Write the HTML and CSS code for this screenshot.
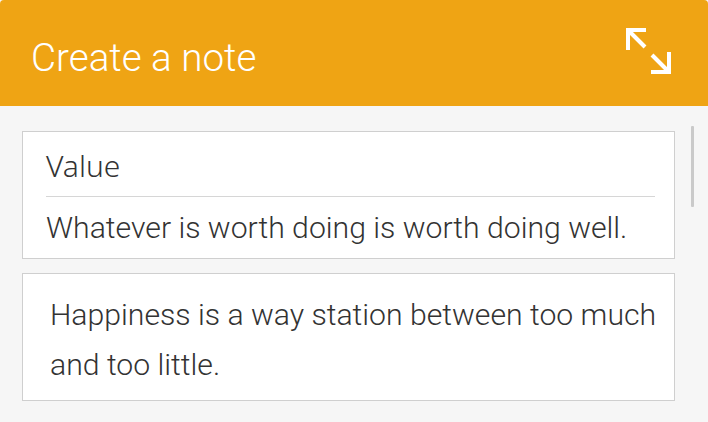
FILE: index.html
```html
<!DOCTYPE html>
<html lang="en">
<head>
<meta charset="utf-8">
<title>Create a note</title>
<link rel="stylesheet" href="styles.css">
</head>
<body>
<div class="app">
  <header class="topbar">
    <h1 class="title">Create a note</h1>
    <button class="expand" aria-label="Expand">
      <svg width="50" height="50" viewBox="0 0 50 50" fill="none" stroke="#fff" stroke-width="4" stroke-linecap="butt" stroke-linejoin="miter">
        <path d="M4 24 V4 H22"/>
        <path d="M4 4 L21 21"/>
        <path d="M45 26 V46 H27"/>
        <path d="M45 46 L28 29"/>
      </svg>
    </button>
  </header>
  <main class="content">
    <section class="card">
      <div class="card-label">Value</div>
      <div class="divider"></div>
      <div class="card-text">Whatever is worth doing is worth doing well.</div>
    </section>
    <section class="card card-plain">
      <p class="note-text">Happiness is a way station between too much and too little.</p>
    </section>
    <div class="scroll-thumb"></div>
  </main>
</div>
</body>
</html>
```

FILE: styles.css
```css
* { box-sizing: border-box; }
html, body {
  margin: 0;
  padding: 0;
  width: 708px;
  height: 422px;
  overflow: hidden;
  background: #f6f6f6;
}
.app {
  display: flex;
  flex-direction: column;
  height: 422px;
  font-family: Roboto, "Liberation Sans", sans-serif;
}
.topbar {
  flex: 0 0 106px;
  display: flex;
  align-items: center;
  justify-content: space-between;
  padding: 0 34px 0 31px;
  background: #efa414;
  border-radius: 4px 4px 0 0;
}
.title {
  margin: 8px 0 0 0;
  font-family: Roboto, sans-serif;
  font-weight: 300;
  font-size: 38.6px;
  color: #fff;
  letter-spacing: 0;
}
.expand {
  display: flex;
  padding: 0;
  margin: -4px 0 0 0;
  border: 0;
  background: none;
  width: 50px;
  height: 50px;
}
.content {
  position: relative;
  flex: 1;
  display: flex;
  flex-direction: column;
  gap: 14px;
  padding: 25px 33px 0 22px;
}
.card {
  background: #fff;
  border: 1px solid #cfcfcf;
  padding: 14px 19px 13px 23px;
}
.card-label {
  font-family: "Noto Sans", sans-serif;
  font-weight: 300;
  font-size: 30px;
  line-height: 40px;
  color: #333;
}
.divider {
  height: 1px;
  background: #d6d6d6;
  margin: 10px 0 13px 0;
}
.card-text {
  font-family: Roboto, sans-serif;
  font-weight: 300;
  font-size: 30.2px;
  line-height: 35px;
  color: #333;
}
.card-plain {
  padding: 16px 10px 10px 27px;
}
.note-text {
  margin: 0;
  font-family: Roboto, sans-serif;
  font-weight: 300;
  font-size: 30.2px;
  line-height: 50px;
  color: #333;
}
.scroll-thumb {
  position: absolute;
  top: 20px;
  left: 691px;
  width: 3px;
  height: 81px;
  background: #cacaca;
  border-radius: 1px;
}
```
